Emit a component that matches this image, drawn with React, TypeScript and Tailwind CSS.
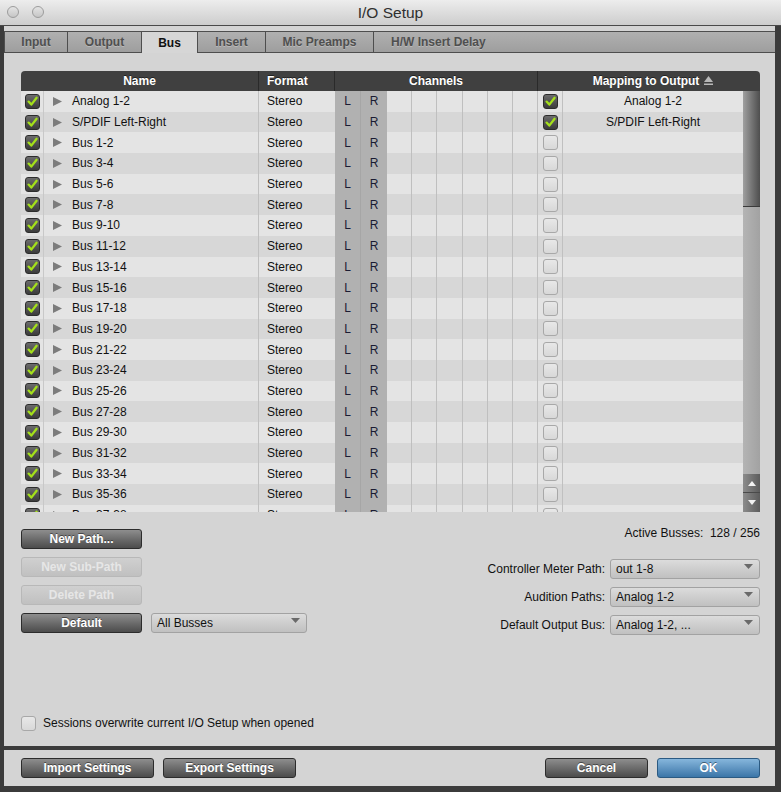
import React from "react";

type BusRow = { name: string; mapped?: string };

const busRows: BusRow[] = [
  { name: "Analog 1-2", mapped: "Analog 1-2" },
  { name: "S/PDIF Left-Right", mapped: "S/PDIF Left-Right" },
  ...Array.from({ length: 19 }, (_, i) => ({ name: `Bus ${2 * i + 1}-${2 * i + 2}` })),
];

const tabs = [
  { label: "Input", w: "w-[63px]" },
  { label: "Output", w: "w-[74px]" },
  { label: "Bus", w: "w-[56px]", active: true },
  { label: "Insert", w: "w-[68px]" },
  { label: "Mic Preamps", w: "w-[108px]" },
];

// six unused channel slots after L / R
const emptySlots = ["w-[25px]", "w-[25px]", "w-[26px]", "w-[25px]", "w-[25px]", "w-[25px]"];

function CheckBox({ on }: { on: boolean }) {
  if (!on) {
    return (
      <span className="block h-[15px] w-[15px] rounded-[3px] border border-[#a8a8a8] bg-gradient-to-b from-[#e8e8e8] to-[#d8d8d8]" />
    );
  }
  return (
    <span className="flex h-[15px] w-[15px] items-center justify-center rounded-[3px] border border-[#2c2c2c] bg-gradient-to-b from-[#6c6c6c] to-[#3c3c3c]">
      <svg width="11" height="11" viewBox="0 0 11 11">
        <path
          d="M1.6 5.6 L4.3 8.6 L9.6 1.8"
          fill="none"
          stroke="#a4e01a"
          strokeWidth="2.3"
          strokeLinecap="round"
          strokeLinejoin="round"
        />
      </svg>
    </span>
  );
}

function DarkButton({ label, w, blue }: { label: string; w: string; blue?: boolean }) {
  const skin = blue
    ? "border-[#2b5a82] from-[#86b6dc] to-[#3b76a8]"
    : "border-[#2c2c2c] from-[#8e8e8e] to-[#4c4c4c]";
  return (
    <button
      className={`flex h-[20px] ${w} items-center justify-center rounded-[3px] border bg-gradient-to-b ${skin} text-[12px] font-bold text-white [text-shadow:0_-1px_0_rgba(0,0,0,0.45)]`}
    >
      {label}
    </button>
  );
}

function DisabledButton({ label }: { label: string }) {
  return (
    <button className="flex h-[20px] w-[121px] items-center justify-center rounded-[3px] border border-[#b8b8b8] bg-gradient-to-b from-[#d0d0d0] to-[#c0c0c0] text-[12px] font-bold text-[#e6e6e6]">
      {label}
    </button>
  );
}

function Dropdown({ value, w }: { value: string; w: string }) {
  return (
    <div
      className={`relative flex h-[20px] ${w} items-center rounded-[3px] border border-[#a2a2a2] bg-gradient-to-b from-[#dcdcdc] to-[#c0c0c0] pl-[5px] text-[12px] text-[#111]`}
    >
      {value}
      <svg className="absolute right-[6px] top-[4px]" width="9" height="6" viewBox="0 0 9 6">
        <polygon points="0,0 9,0 4.5,5" fill="#6a6a6a" />
      </svg>
    </div>
  );
}

function BusTableRow({ row, index }: { row: BusRow; index: number }) {
  const stripe = index % 2 === 0 ? "bg-[#e4e4e4]" : "bg-[#d7d7d7]";
  return (
    <div className={`flex h-[20.7px] shrink-0 text-[12px] text-[#111] ${stripe}`}>
      <div className="flex w-[23px] items-center justify-center border-r border-[#c8c8c8]">
        <CheckBox on />
      </div>
      <div className="flex w-[215px] items-center border-r border-[#c0c0c0] pl-[9px]">
        <svg width="9" height="9" viewBox="0 0 9 9">
          <polygon points="0,0 9,4.5 0,9" fill="#7c7c7c" />
        </svg>
        <span className="ml-[10px]">{row.name}</span>
      </div>
      <div className="flex w-[76px] items-center pl-[8px]">Stereo</div>
      <div className="flex w-[26px] items-center justify-center border-r border-[#a6a6a6] bg-[#b1b1b1] text-[#1b1b33]">L</div>
      <div className="flex w-[26px] items-center justify-center bg-[#b1b1b1] text-[#1b1b33]">R</div>
      {emptySlots.map((w, k) => (
        <div key={k} className={`${w} border-r border-[#bfbfbf]`} />
      ))}
      <div className="flex w-[25px] items-center justify-center border-r border-[#c0c0c0]">
        <CheckBox on={!!row.mapped} />
      </div>
      <div className="flex w-[180px] items-center justify-center">{row.mapped}</div>
    </div>
  );
}

function Scrollbar() {
  return (
    <div className="flex h-[421px] w-[17px] flex-col">
      <div className="h-[116px] border-b border-[#3a3a3a] bg-gradient-to-r from-[#a0a0a0] via-[#767676] to-[#4e4e4e]" />
      <div className="flex-1 bg-gradient-to-r from-[#b4b4b4] to-[#a2a2a2]" />
      <div className="flex h-[19px] items-center justify-center border-b border-[#4a4a4a] bg-gradient-to-r from-[#8c8c8c] to-[#5c5c5c]">
        <svg width="8" height="5" viewBox="0 0 8 5">
          <polygon points="0,5 8,5 4,0" fill="#f2f2f2" />
        </svg>
      </div>
      <div className="flex h-[19px] items-center justify-center bg-gradient-to-r from-[#8c8c8c] to-[#5c5c5c]">
        <svg width="8" height="5" viewBox="0 0 8 5">
          <polygon points="0,0 8,0 4,5" fill="#f2f2f2" />
        </svg>
      </div>
    </div>
  );
}

function BusTable() {
  return (
    <div className="w-[739px]">
      <div className="flex h-[20px] rounded-t-[4px] bg-[#404040] text-[12px] font-bold text-white [text-shadow:0_-1px_0_rgba(0,0,0,0.5)]">
        <div className="flex w-[238px] items-center justify-center border-r border-[#2a2a2a]">Name</div>
        <div className="flex w-[76px] items-center border-r border-[#2a2a2a] pl-[8px]">Format</div>
        <div className="flex w-[203px] items-center justify-center border-r border-[#2a2a2a]">Channels</div>
        <div className="flex flex-1 items-center justify-center gap-[5px] pl-[8px]">
          Mapping to Output
          <svg width="9" height="10" viewBox="0 0 9 10">
            <polygon points="4.5,0 9,6 0,6" fill="#b8b8b8" />
            <rect x="0" y="7.5" width="9" height="1.5" fill="#b8b8b8" />
          </svg>
        </div>
      </div>
      <div className="flex">
        <div className="flex h-[421px] w-[722px] flex-col overflow-hidden">
          {busRows.map((row, i) => (
            <BusTableRow key={row.name} row={row} index={i} />
          ))}
        </div>
        <Scrollbar />
      </div>
    </div>
  );
}

export default function App() {
  return (
    <div className="flex h-[792px] w-[781px] flex-col overflow-hidden bg-[#3b3b3b] [font-family:'Liberation_Sans',Arial,sans-serif]">
      {/* title bar */}
      <div className="relative flex h-[26px] shrink-0 items-center justify-center border-b border-[#4a4a4a] bg-gradient-to-b from-[#ededed] to-[#cdcdcd]">
        <div className="absolute left-[7px] top-[6px] flex gap-[13px]">
          <span className="block h-[12px] w-[12px] rounded-full border border-[#9c9c9c] bg-gradient-to-b from-[#e4e4e4] to-[#c6c6c6]" />
          <span className="block h-[12px] w-[12px] rounded-full border border-[#9c9c9c] bg-gradient-to-b from-[#e4e4e4] to-[#c6c6c6]" />
        </div>
        <span className="text-[15.5px] text-[#2f2f2f]">I/O Setup</span>
      </div>

      <div className="ml-[4px] flex h-[720px] w-[771px] flex-col bg-[#d4d4d4] pt-[5px]">
        {/* tabs */}
        <div className="flex h-[22px] shrink-0 border-l border-t border-[#4e4e4e] text-[12px] font-bold">
          {tabs.map((t) => (
            <div
              key={t.label}
              className={`flex ${t.w} items-center justify-center border-r border-[#4e4e4e] ${
                t.active
                  ? "bg-[#d6d6d6] text-[#111]"
                  : "border-b bg-gradient-to-b from-[#b0b0b0] to-[#9e9e9e] text-[#4f4f4f] [text-shadow:0_1px_0_rgba(255,255,255,0.25)]"
              }`}
            >
              {t.label}
            </div>
          ))}
          <div className="flex flex-1 items-center border-b border-[#4e4e4e] bg-gradient-to-b from-[#b0b0b0] to-[#9e9e9e] pl-[17px] text-[#4f4f4f] [text-shadow:0_1px_0_rgba(255,255,255,0.25)]">
            H/W Insert Delay
          </div>
        </div>

        <div className="flex flex-1 flex-col pl-[17px] pr-[15px] pt-[18px]">
          <BusTable />

          <div className="mt-[11px] flex justify-between text-[12px] text-[#111]">
            <div className="flex flex-col gap-[8px] pt-[6px]">
              <DarkButton label="New Path..." w="w-[121px]" />
              <DisabledButton label="New Sub-Path" />
              <DisabledButton label="Delete Path" />
              <div className="flex items-center gap-[9px]">
                <DarkButton label="Default" w="w-[121px]" />
                <Dropdown value="All Busses" w="w-[156px]" />
              </div>
            </div>
            <div className="flex flex-col items-end">
              <div className="flex h-[20px] items-center">Active Busses:&nbsp; 128 / 256</div>
              <div className="mt-[16px] flex flex-col items-end gap-[8px]">
                <div className="flex items-center gap-[5px]">
                  Controller Meter Path:
                  <Dropdown value="out 1-8" w="w-[150px]" />
                </div>
                <div className="flex items-center gap-[5px]">
                  Audition Paths:
                  <Dropdown value="Analog 1-2" w="w-[150px]" />
                </div>
                <div className="flex items-center gap-[5px]">
                  Default Output Bus:
                  <Dropdown value="Analog 1-2, ..." w="w-[150px]" />
                </div>
              </div>
            </div>
          </div>

          <label className="mt-auto mb-[14px] flex items-center gap-[7px] text-[12px] text-[#111]">
            <CheckBox on={false} />
            Sessions overwrite current I/O Setup when opened
          </label>
        </div>
      </div>

      {/* footer buttons */}
      <div className="ml-[4px] mt-[4px] flex h-[36px] w-[771px] items-center bg-[#d4d4d4] pl-[17px] pr-[15px]">
        <DarkButton label="Import Settings" w="w-[133px]" />
        <div className="ml-[9px]">
          <DarkButton label="Export Settings" w="w-[133px]" />
        </div>
        <div className="flex-1" />
        <DarkButton label="Cancel" w="w-[103px]" />
        <div className="ml-[9px]">
          <DarkButton label="OK" w="w-[103px]" blue />
        </div>
      </div>
    </div>
  );
}
